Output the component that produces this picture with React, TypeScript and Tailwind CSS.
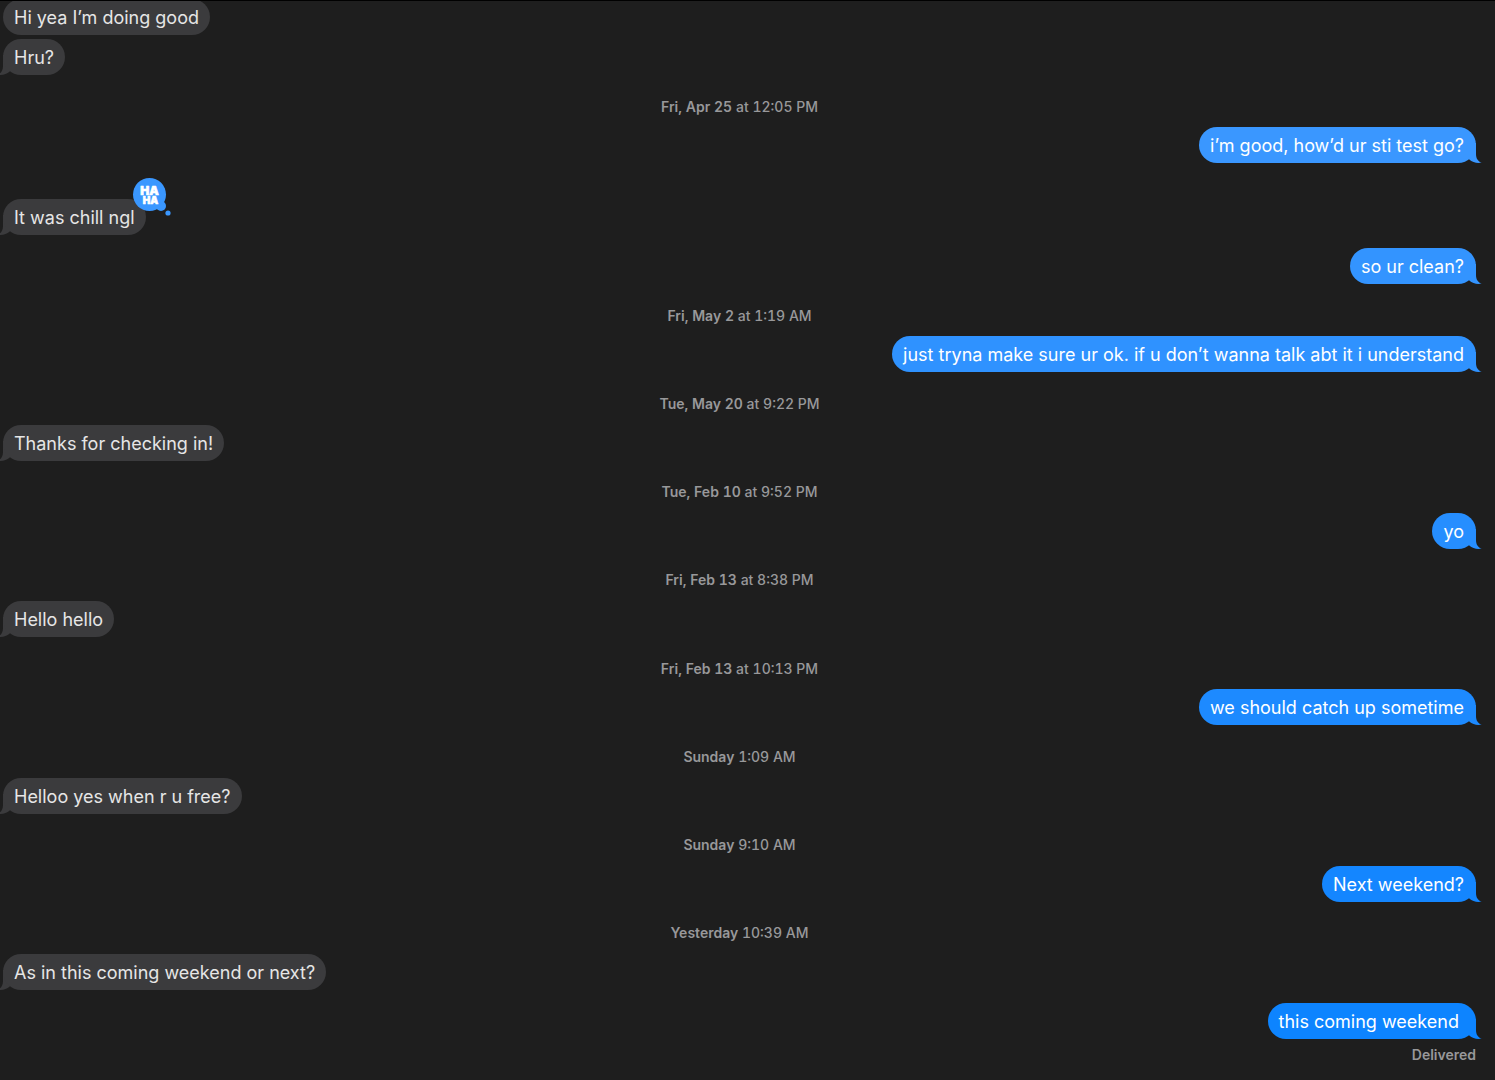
import React from 'react';
import clsx from 'clsx';

type Item =
  | { kind: 'time'; day: string; time: string }
  | { kind: 'in'; text: string; gap?: string; tail?: boolean; haha?: boolean }
  | { kind: 'out'; text: string; color: string; gap?: string };

// sent bubbles get deeper towards the bottom of the thread
const THREAD: Item[] = [
  { kind: 'in', text: 'Hi yea I’m doing good', tail: false, gap: '-mt-0.5' },
  { kind: 'in', text: 'Hru?', gap: 'mt-1' },
  { kind: 'time', day: 'Fri, Apr 25', time: 'at 12:05 PM' },
  { kind: 'out', text: 'i’m good, how’d ur sti test go?', color: 'text-[#3a97ff]' },
  { kind: 'in', text: 'It was chill ngl', gap: 'mt-9', haha: true },
  { kind: 'out', text: 'so ur clean?', color: 'text-[#3394ff]', gap: 'mt-[13px]' },
  { kind: 'time', day: 'Fri, May 2', time: 'at 1:19 AM' },
  { kind: 'out', text: 'just tryna make sure ur ok. if u don’t wanna talk abt it i understand', color: 'text-[#2f92ff]' },
  { kind: 'time', day: 'Tue, May 20', time: 'at 9:22 PM' },
  { kind: 'in', text: 'Thanks for checking in!' },
  { kind: 'time', day: 'Tue, Feb 10', time: 'at 9:52 PM' },
  { kind: 'out', text: 'yo', color: 'text-[#268eff]' },
  { kind: 'time', day: 'Fri, Feb 13', time: 'at 8:38 PM' },
  { kind: 'in', text: 'Hello hello' },
  { kind: 'time', day: 'Fri, Feb 13', time: 'at 10:13 PM' },
  { kind: 'out', text: 'we should catch up sometime', color: 'text-[#1d8aff]' },
  { kind: 'time', day: 'Sunday', time: '1:09 AM' },
  { kind: 'in', text: 'Helloo yes when r u free?' },
  { kind: 'time', day: 'Sunday', time: '9:10 AM' },
  { kind: 'out', text: 'Next weekend?', color: 'text-[#1486ff]' },
  { kind: 'time', day: 'Yesterday', time: '10:39 AM' },
  { kind: 'in', text: 'As in this coming weekend or next?' },
  { kind: 'out', text: 'this coming weekend ', color: 'text-[#0d84ff]', gap: 'mt-[13px]' },
];

const Tail = ({ left }: { left?: boolean }) => (
  <svg
    viewBox="0 0 17 20"
    className={clsx('absolute bottom-0 w-[17px] h-5 fill-current', left ? '-left-[6px] -scale-x-100' : '-right-[6px]')}
    aria-hidden="true"
  >
    <path d="M11 0V11C11 15.5 13 18.6 16.8 19.6C12.5 20.6 7.5 19.6 4.3 16.6L0 12L5 0Z" />
  </svg>
);

const Haha = () => (
  <svg viewBox="0 0 40 40" className="absolute -top-[22px] -right-[26px] w-10 h-10" role="img" aria-label="Haha">
    <g fill="#3a97ff">
      <circle cx="17.5" cy="17.5" r="16.5" />
      <circle cx="29" cy="29" r="5" />
      <circle cx="36" cy="36" r="2.6" />
    </g>
    <text
      fill="#fff"
      stroke="#fff"
      strokeWidth="0.6"
      strokeLinejoin="round"
      fontFamily="Inter, sans-serif"
      fontWeight="900"
      textAnchor="middle"
    >
      <tspan x="17.5" y="18" fontSize="12">HA</tspan>
      <tspan x="18.5" y="27" fontSize="10">HA</tspan>
    </text>
  </svg>
);

const Bubble = ({ item }: { item: Exclude<Item, { kind: 'time' }> }) => {
  const incoming = item.kind === 'in';
  return (
    <div
      className={clsx(
        'relative w-fit max-w-2xl shrink-0',
        incoming ? 'self-start text-[#3b3b3d]' : ['self-end', item.color],
        item.gap
      )}
    >
      {(!incoming || item.tail !== false) && <Tail left={incoming} />}
      <div
        className={clsx('relative rounded-[18px] bg-current pl-[11px] pt-[7px] pb-[5px]', incoming ? 'pr-[11px]' : 'pr-3')}
      >
        <p className={clsx('text-lg leading-6 whitespace-pre-wrap', incoming ? 'text-[#e6e6e6]' : 'text-white')}>
          {item.text}
        </p>
      </div>
      {incoming && item.haha && <Haha />}
    </div>
  );
};

export default function App() {
  return (
    <main className="min-h-screen flex flex-col overflow-hidden border-t border-black bg-[#1e1e1e] pl-[3px] pr-[19px] font-['Inter',sans-serif]">
      {THREAD.map((item, i) =>
        item.kind === 'time' ? (
          <div key={i} className="grow min-h-[52px] flex items-center justify-center pt-[11px]">
            <time className="text-sm font-medium tabular-nums text-[#98989a]">
              <span className="font-semibold">{item.day}</span> {item.time}
            </time>
          </div>
        ) : (
          <Bubble key={i} item={item} />
        )
      )}
      <p className="h-[41px] shrink-0 self-end pt-1.5 text-sm leading-5 font-semibold text-[#98989a]">Delivered</p>
    </main>
  );
}
